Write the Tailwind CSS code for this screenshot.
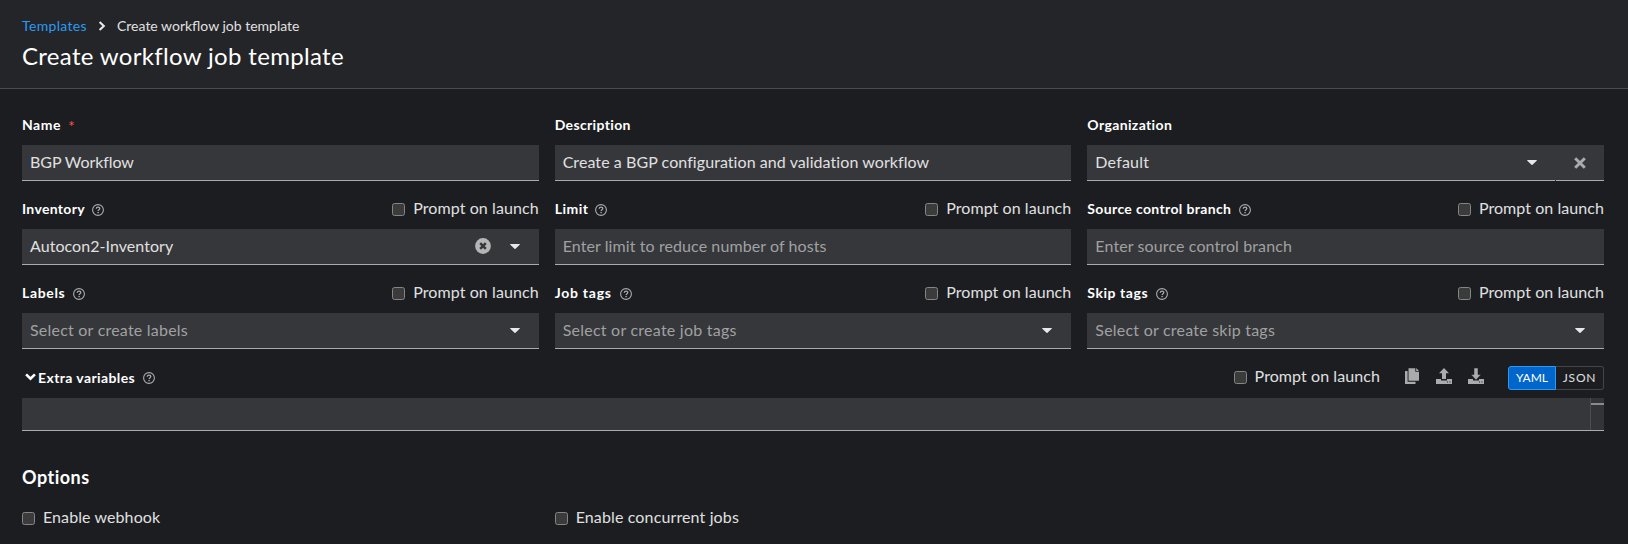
<!DOCTYPE html>
<html lang="en">
<head>
<meta charset="utf-8">
<title>Create workflow job template</title>
<script src="https://cdn.jsdelivr.net/npm/@tailwindcss/browser@4"></script>
</head>
<body class="bg-[#1b1d21] text-[#e0e0e0] font-[Lato,sans-serif] h-[544px] overflow-hidden text-base leading-6 whitespace-nowrap">
<svg class="hidden">
  <symbol id="help" viewBox="0 0 12 12"><circle cx="6" cy="6" r="5.4" fill="none" stroke="#aaabac" stroke-width="1.1"/><path d="M4.2 4.8C4.3 3.7 5 3.1 6 3.1s1.8.6 1.8 1.5C7.8 5.700 6.100 5.700 6.100 7" fill="none" stroke="#aaabac" stroke-width="1.3"/><circle cx="6.100" cy="8.600" r=".8" fill="#aaabac"/></symbol>
  <symbol id="caret" viewBox="0 0 10 5"><path d="M.6 0h8.800q.8.100.3.800L5.500 4.700q-.5.500-1 0L.3.800Q-.2.100.6 0z" fill="#e8e8e8"/></symbol>
  <symbol id="box" viewBox="0 0 13 13"><rect x=".5" y=".5" width="12" height="12" rx="2" fill="#3b3b3b" stroke="#858585"/></symbol>
  <symbol id="tray" viewBox="0 0 16 16"><path d="M0 11h5v1.500h6V11h5v5H0z" fill="#aaabac"/><path d="M11 13.500h1v1h-1zM13.500 13.500h1v1h-1z" fill="#1b1d21"/></symbol>
</svg>

<header class="h-[89px] border-b border-[#4a4b4e] bg-[#242528] px-[22px] pt-4">
  <nav class="flex h-5 items-center text-sm leading-5">
    <a class="w-16 text-[#2b9af3] tracking-[0.34px]">Templates</a>
    <svg class="ml-[12px] mr-[10.500px] h-[10px] w-[8px]" viewBox="0 0 8 10"><path d="M1.600 1l4.200 4-4.200 4" fill="none" stroke="#e8e8e8" stroke-width="2.100"/></svg>
    <span class="ml-[0.500px]">Create workflow job template</span>
  </nav>
  <h1 class="mt-[5px] text-2xl leading-[30px] tracking-[0.33px] text-white">Create workflow job template</h1>
</header>

<main class="px-[22px] pr-6 pt-6">
  <div class="grid grid-cols-3 gap-x-4 gap-y-4">
    <section>
      <div class="mb-2 flex h-6 items-center text-sm font-bold text-white"><span class="tracking-[0.50px]">Name</span><span class="ml-[7px] mt-[1px] text-base font-normal text-[#fe5142]">*</span></div>
      <div class="flex h-9 items-center border-b border-[#aaabac] bg-[#36373a] px-2"><span class="mt-[-2px] tracking-[-0.07px]">BGP Workflow</span></div>
    </section>
    <section>
      <div class="mb-2 flex h-6 items-center text-sm font-bold tracking-[0.35px] text-white">Description</div>
      <div class="flex h-9 items-center border-b border-[#aaabac] bg-[#36373a] px-2"><span class="mt-[-2px] tracking-[0.07px]">Create a BGP configuration and validation workflow</span></div>
    </section>
    <section>
      <div class="mb-2 flex h-6 items-center text-sm font-bold tracking-[0.37px] text-white">Organization</div>
      <div class="flex h-9 bg-[#36373a]">
        <div class="flex flex-1 items-center justify-between border-b border-[#aaabac] pl-2 pr-[18px]"><span class="mt-[-2px] tracking-[0.20px]">Default</span><svg class="h-[5px] w-[10px]"><use href="#caret"/></svg></div>
        <div class="ml-px flex w-12 items-center justify-center border-b border-[#aaabac]"><svg class="mr-px h-[12px] w-[12px]" viewBox="0 0 12 12"><path d="M1.200 1.200l9.600 9.600M10.800 1.200l-9.600 9.600" stroke="#aaabac" stroke-width="2.900"/></svg></div>
      </div>
    </section>

    <section>
      <div class="mb-2 flex h-6 items-center">
        <span class="text-sm font-bold tracking-[0.32px] text-white">Inventory</span><svg class="ml-[7px] mt-[2px] size-3"><use href="#help"/></svg>
        <svg class="ml-auto mr-2 size-[13px]"><use href="#box"/></svg><span class="mt-[-2px] tracking-[0.08px]">Prompt on launch</span>
      </div>
      <div class="flex h-9 items-center border-b border-[#aaabac] bg-[#36373a] pl-2 pr-[19px]"><span class="mt-[-2px] flex-1 tracking-[0.05px]">Autocon2-Inventory</span><svg class="mr-[19px] size-4 -mt-[2px]" viewBox="0 0 16 16"><circle cx="8" cy="8" r="7.900" fill="#b4b5b6"/><path d="M5.200 5.200l5.600 5.600M10.800 5.200l-5.600 5.600" stroke="#36373a" stroke-width="2.500"/></svg><svg class="h-[5px] w-[10px]"><use href="#caret"/></svg></div>
    </section>
    <section>
      <div class="mb-2 flex h-6 items-center">
        <span class="text-sm font-bold tracking-[0.50px] text-white">Limit</span><svg class="ml-[7px] mt-[2px] size-3"><use href="#help"/></svg>
        <svg class="ml-auto mr-2 size-[13px]"><use href="#box"/></svg><span class="mt-[-2px] tracking-[0.06px]">Prompt on launch</span>
      </div>
      <div class="flex h-9 items-center border-b border-[#aaabac] bg-[#36373a] px-2 text-[#a0a1a2]"><span class="mt-[-2px] tracking-[0.09px]">Enter limit to reduce number of hosts</span></div>
    </section>
    <section>
      <div class="mb-2 flex h-6 items-center">
        <span class="text-sm font-bold tracking-[0.36px] text-white">Source control branch</span><svg class="ml-[8px] mt-[2px] size-3"><use href="#help"/></svg>
        <svg class="ml-auto mr-2 size-[13px]"><use href="#box"/></svg><span class="mt-[-2px] tracking-[0.06px]">Prompt on launch</span>
      </div>
      <div class="flex h-9 items-center border-b border-[#aaabac] bg-[#36373a] px-2 text-[#a0a1a2]"><span class="mt-[-2px] tracking-[0.11px]">Enter source control branch</span></div>
    </section>

    <section>
      <div class="mb-2 flex h-6 items-center">
        <span class="text-sm font-bold tracking-[0.65px] text-white">Labels</span><svg class="ml-[7.500px] mt-[2px] size-3"><use href="#help"/></svg>
        <svg class="ml-auto mr-2 size-[13px]"><use href="#box"/></svg><span class="mt-[-2px] tracking-[0.08px]">Prompt on launch</span>
      </div>
      <div class="flex h-9 items-center justify-between border-b border-[#aaabac] bg-[#36373a] pl-2 pr-[19px] text-[#a0a1a2]"><span class="mt-[-2px] tracking-[0.22px]">Select or create labels</span><svg class="h-[5px] w-[10px]"><use href="#caret"/></svg></div>
    </section>
    <section>
      <div class="mb-2 flex h-6 items-center">
        <span class="text-sm font-bold tracking-[0.75px] text-white">Job tags</span><svg class="ml-2 mt-[2px] size-3"><use href="#help"/></svg>
        <svg class="ml-auto mr-2 size-[13px]"><use href="#box"/></svg><span class="mt-[-2px] tracking-[0.06px]">Prompt on launch</span>
      </div>
      <div class="flex h-9 items-center justify-between border-b border-[#aaabac] bg-[#36373a] pl-2 pr-[19px] text-[#a0a1a2]"><span class="mt-[-2px] tracking-[0.24px]">Select or create job tags</span><svg class="h-[5px] w-[10px]"><use href="#caret"/></svg></div>
    </section>
    <section>
      <div class="mb-2 flex h-6 items-center">
        <span class="text-sm font-bold tracking-[0.55px] text-white">Skip tags</span><svg class="ml-[7.500px] mt-[2px] size-3"><use href="#help"/></svg>
        <svg class="ml-auto mr-2 size-[13px]"><use href="#box"/></svg><span class="mt-[-2px] tracking-[0.06px]">Prompt on launch</span>
      </div>
      <div class="flex h-9 items-center justify-between border-b border-[#aaabac] bg-[#36373a] pl-2 pr-[19px] text-[#a0a1a2]"><span class="mt-[-2px] tracking-[0.22px]">Select or create skip tags</span><svg class="h-[5px] w-[10px]"><use href="#caret"/></svg></div>
    </section>
  </div>

  <div class="mb-2 mt-[17px] flex h-6 items-center">
    <svg class="ml-[3px] mr-[2px] h-[8px] w-[11px] -mt-[2px]" viewBox="0 0 11 8"><path d="M1.100 1.300l4.400 4.400 4.400-4.400" fill="none" stroke="#fff" stroke-width="2.600"/></svg>
    <span class="text-sm font-bold tracking-[0.40px] text-white">Extra variables</span><svg class="ml-[7.500px] size-3"><use href="#help"/></svg>
    <svg class="ml-auto mr-2 size-[13px] -mt-[2px]"><use href="#box"/></svg><span class="-mt-1 tracking-[0.08px]">Prompt on launch</span>
    <svg class="ml-[25px] h-4 w-[14px] -mt-1" viewBox="0 0 14 16" fill="#aaabac"><path d="M3.500.2h6.800v3.600H14v8.400q0 .6-.6.6H4.100q-.6 0-.6-.6zM11.200 0L14 2.900h-2.800zM0 3h2.600v10.700h7.900V16H.6q-.6 0-.6-.6z"/></svg>
    <svg class="ml-[17px] size-4 -mt-1" viewBox="0 0 16 16"><use href="#tray"/><path d="M8 0l5 5.300H10V11H6V5.300H3z" fill="#aaabac"/></svg>
    <svg class="ml-4 size-4 -mt-1" viewBox="0 0 16 16"><use href="#tray"/><path d="M8 12L3 6.500h3V0h4v6.500h3z" fill="#aaabac" stroke="#1b1d21" stroke-width=".5"/></svg>
    <div class="ml-6 flex h-6 w-24 text-xs leading-6">
      <div class="flex w-12 items-center justify-center rounded-l-[3px] border border-[#2b9af3] bg-[#06c] text-white">YAML</div>
      <div class="flex w-12 items-center justify-center rounded-r-[3px] border border-l-0 border-[#444548] tracking-[0.8px]">JSON</div>
    </div>
  </div>

  <div class="flex h-[33px] justify-end border-b border-[#aaabac] bg-[#36373a]">
    <div class="w-[14px] border-l border-[#4c4d50] bg-[#333437] pt-[5px]"><div class="h-[2px] bg-[#8a8b8c]"></div></div>
  </div>

  <h2 class="mt-[34px] text-lg font-bold leading-6 tracking-[0.50px] text-white">Options</h2>
  <div class="mt-[17px] grid grid-cols-3 gap-x-4">
    <label class="flex h-6 items-center"><svg class="mr-2 size-[13px]"><use href="#box"/></svg><span class="mt-[-2px] tracking-[0.09px]">Enable webhook</span></label>
    <label class="flex h-6 items-center"><svg class="mr-2 size-[13px]"><use href="#box"/></svg><span class="mt-[-2px] tracking-[0.13px]">Enable concurrent jobs</span></label>
  </div>
</main>
</body>
</html>
